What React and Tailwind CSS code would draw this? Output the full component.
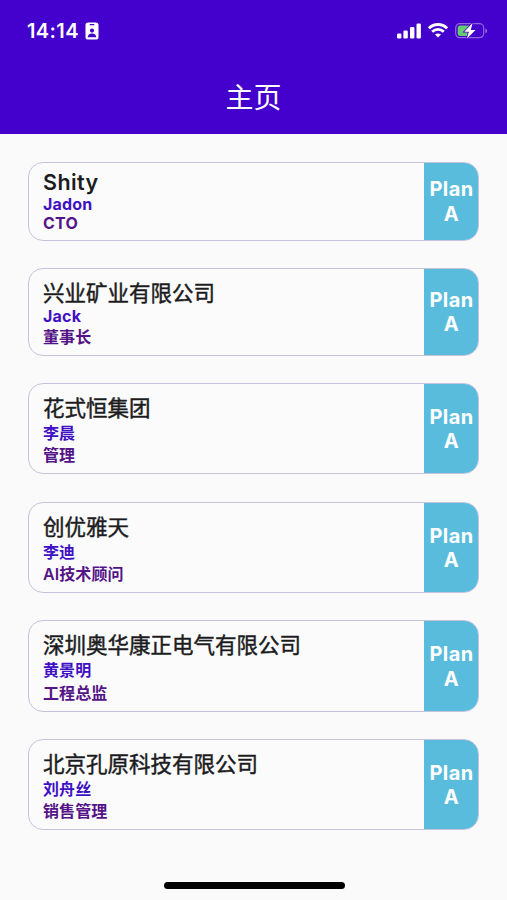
import clsx from 'clsx'

const contacts = [
    { company: 'Shity', name: 'Jadon', title: 'CTO', plan: 'Plan A' },
    { company: '兴业矿业有限公司', name: 'Jack', title: '董事长', plan: 'Plan A' },
    { company: '花式恒集团', name: '李晨', title: '管理', plan: 'Plan A' },
    { company: '创优雅天', name: '李迪', title: 'AI技术顾问', plan: 'Plan A' },
    { company: '深圳奥华康正电气有限公司', name: '黄景明', title: '工程总监', plan: 'Plan A' },
    { company: '北京孔原科技有限公司', name: '刘舟丝', title: '销售管理', plan: 'Plan A' },
]

// Chinese glyphs need a taller line than Latin ones
const hasChinese = text => /[\u4e00-\u9fff]/.test(text)

const smallLine = text => (hasChinese(text) ? 'leading-[22.5px] font-semibold tracking-[0.1px]' : 'leading-[19px] font-bold tracking-[0.2px]')

function StatusBar() {
    return (
        <div className="flex h-[61px] items-center justify-between pl-[27px] pr-[19px] text-white">
            <div className="flex items-center gap-[6px]">
                <span className="text-[20px] font-semibold leading-6 tracking-[0.4px]">14:14</span>
                <svg width="14" height="18" viewBox="0 0 14 18">
                    <rect x="0.5" y="0.5" width="13" height="17" rx="2.6" fill="#fff" />
                    <rect x="4.6" y="2" width="4.8" height="1.3" rx="0.6" fill="#4400cc" />
                    <circle cx="7" cy="8.6" r="2.1" fill="#4400cc" />
                    <path d="M2.8 15.2c0-2.3 1.5-3.7 4.2-3.7s4.2 1.4 4.2 3.7z" fill="#4400cc" />
                </svg>
            </div>
            <div className="flex items-center gap-[7px]">
                <svg width="24" height="16" viewBox="0 0 24 16" fill="#fff">
                    <rect x="0" y="10.5" width="4.4" height="5" rx="1.2" />
                    <rect x="6.4" y="7.5" width="4.4" height="8" rx="1.2" />
                    <rect x="13" y="4" width="4.4" height="11.5" rx="1.2" />
                    <rect x="19.5" y="0.5" width="4.4" height="15" rx="1.2" />
                </svg>
                <svg width="20" height="15" viewBox="0 0 20 15" fill="none" stroke="#fff" strokeWidth="2.8">
                    <path d="M0.9 5.3C6 0.2 14 0.2 19.1 5.3" />
                    <path d="M4.2 8.8c3.2-3.2 8.4-3.2 11.6 0" />
                    <path d="M10 14.6l-3-3c1.7-1.6 4.3-1.6 6 0z" fill="#fff" stroke="none" />
                </svg>
                <svg width="33" height="18" viewBox="0 0 33 18">
                    <rect x="0.7" y="1.7" width="28" height="14" rx="4.2" fill="none" stroke="#fff" strokeOpacity="0.4" strokeWidth="1.2" />
                    <path d="M30.4 6.5c2.2 0.8 2.2 4 0 4.8z" fill="#fff" fillOpacity="0.45" />
                    <path d="M5.2 3.5H14v10.4H5.2c-1.5 0-2.5-1-2.5-2.5V6c0-1.5 1-2.5 2.5-2.5z" fill="#66cc70" />
                    <path d="M17.6 1L9.3 9.8h4.6L11.8 16.8l8.7-8.9H15.8z" fill="#fff" stroke="#4400cc" strokeWidth="1.6" paintOrder="stroke" />
                </svg>
            </div>
        </div>
    )
}

function ContactCard({ company, name, title, plan }) {
    return (
        <div className="flex w-[451px] overflow-hidden rounded-[15px] border border-[#c6c2dc] bg-[#fbfbfc]">
            <div className="flex-1 pt-[6.5px] pb-[6.5px] pl-[14px]">
                <h2
                    className={clsx(
                        'text-[21.5px] text-[#1c1c1e]',
                        hasChinese(company)
                            ? 'pt-[3.5px] leading-[28px] [-webkit-text-stroke:0.45px_#1c1c1e]'
                            : 'font-semibold leading-[26px] tracking-[0.4px]'
                    )}
                >
                    {company}
                </h2>
                <p className={clsx('text-[16px] text-[#3f10c4]', smallLine(name))}>{name}</p>
                <p className={clsx('text-[16px] text-[#541487]', smallLine(title))}>{title}</p>
            </div>
            <div className="flex w-[54px] items-center justify-center bg-[#5abcdd] pt-[1.5px] pl-px text-center text-[20px] font-bold leading-[24.5px] tracking-[0.4px] text-white">
                {plan}
            </div>
        </div>
    )
}

export default function App() {
    return (
        <div className="flex h-[900px] w-[507px] flex-col bg-[#fafafa] font-['Inter','Noto_Sans_CJK_SC',sans-serif]">
            <header className="h-[134px] bg-[#4400cc]">
                <StatusBar />
                <h1 className="pt-[17px] text-center text-[28px] leading-[40px] text-white">主页</h1>
            </header>
            <main className="flex flex-1 flex-col gap-[27.2px] pl-[28px] pt-[27.5px]">
                {contacts.map(contact => (
                    <ContactCard key={contact.company} {...contact} />
                ))}
            </main>
            {/* Home indicator */}
            <div className="flex justify-center pb-[11px] pl-px">
                <div className="h-[7px] w-[181px] rounded-full bg-black" />
            </div>
        </div>
    )
}
